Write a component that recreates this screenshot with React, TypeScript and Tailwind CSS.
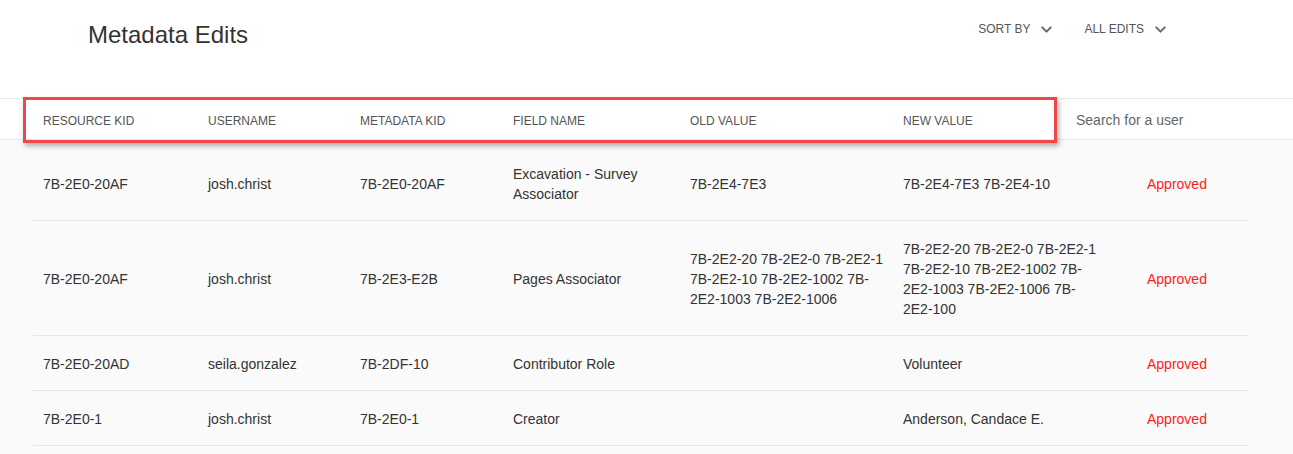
import { ChevronDown } from 'lucide-react'

type Edit = {
	resourceKid: string
	username: string
	metadataKid: string
	fieldName: string
	oldValue: string
	newValue: string
	status: string
}

const edits: Edit[] = [
	{
		resourceKid: '7B-2E0-20AF',
		username: 'josh.christ',
		metadataKid: '7B-2E0-20AF',
		fieldName: 'Excavation - Survey Associator',
		oldValue: '7B-2E4-7E3',
		newValue: '7B-2E4-7E3 7B-2E4-10',
		status: 'Approved',
	},
	{
		resourceKid: '7B-2E0-20AF',
		username: 'josh.christ',
		metadataKid: '7B-2E3-E2B',
		fieldName: 'Pages Associator',
		oldValue: '7B-2E2-20 7B-2E2-0 7B-2E2-1 7B-2E2-10 7B-2E2-1002 7B-2E2-1003 7B-2E2-1006',
		newValue:
			'7B-2E2-20 7B-2E2-0 7B-2E2-1 7B-2E2-10 7B-2E2-1002 7B-2E2-1003 7B-2E2-1006 7B-2E2-100',
		status: 'Approved',
	},
	{
		resourceKid: '7B-2E0-20AD',
		username: 'seila.gonzalez',
		metadataKid: '7B-2DF-10',
		fieldName: 'Contributor Role',
		oldValue: '',
		newValue: 'Volunteer',
		status: 'Approved',
	},
	{
		resourceKid: '7B-2E0-1',
		username: 'josh.christ',
		metadataKid: '7B-2E0-1',
		fieldName: 'Creator',
		oldValue: '',
		newValue: 'Anderson, Candace E.',
		status: 'Approved',
	},
]

const Dropdown = ({ label }: { label: string }) => (
	<button className="flex items-center gap-[8px] text-[12px] text-[#555] uppercase">
		{label}
		<ChevronDown size={17} strokeWidth={2.75} className="text-[#666]" />
	</button>
)

export default function App() {
	return (
		<div className="relative w-[1293px] h-[454px] overflow-hidden bg-[#fafafa] font-['Liberation_Sans',Arial,sans-serif] text-[#333]">
			<header className="flex justify-between h-[98px] bg-white">
				<h1 className="pl-[88px] pt-[20px] text-[24px] leading-[30px] text-[#333]">
					Metadata Edits
				</h1>
				<div className="flex gap-[29px] pt-[20px] pr-[124px] h-fit">
					<Dropdown label="Sort by" />
					<Dropdown label="All edits" />
				</div>
			</header>

			<div className="flex items-center h-[42px] pl-[43px] pt-[3px] bg-white border-y border-[#e6e6e6] text-[12px] text-[#555] uppercase">
				<div className="w-[165px]">Resource KID</div>
				<div className="w-[152px]">Username</div>
				<div className="w-[153px]">Metadata KID</div>
				<div className="w-[177px]">Field Name</div>
				<div className="w-[213px]">Old Value</div>
				<div className="w-[173px]">New Value</div>
				<input
					placeholder="Search for a user"
					className="w-[180px] text-[14px] normal-case text-[#333] placeholder:text-[#666] outline-none bg-transparent"
				/>
			</div>

			<div className="ml-[33px] w-[1215px]">
				{edits.map((edit, i) => (
					<div
						key={i}
						className={`flex items-center pl-[10px] border-b border-[#e6e6e6] text-[14px] leading-5 ${i === 0 ? 'pt-[24px] pb-[16px]' : 'pt-[18px] pb-[16px]'}`}
					>
						<div className="w-[165px] shrink-0">{edit.resourceKid}</div>
						<div className="w-[152px] shrink-0">{edit.username}</div>
						<div className="w-[153px] shrink-0">{edit.metadataKid}</div>
						<div className="w-[177px] shrink-0 pr-[30px]">{edit.fieldName}</div>
						<div className="w-[213px] shrink-0 pr-[13px]">{edit.oldValue}</div>
						<div className="w-[244px] shrink-0 pr-[44px]">{edit.newValue}</div>
						<div className="text-[#ff1a1a]">{edit.status}</div>
					</div>
				))}
			</div>

			<div className="absolute left-[23px] top-[97px] w-[1034px] h-[46px] border-[3px] border-[#f04848] shadow-[2px_3px_5px_rgba(0,0,0,0.3)] pointer-events-none" />
		</div>
	)
}
